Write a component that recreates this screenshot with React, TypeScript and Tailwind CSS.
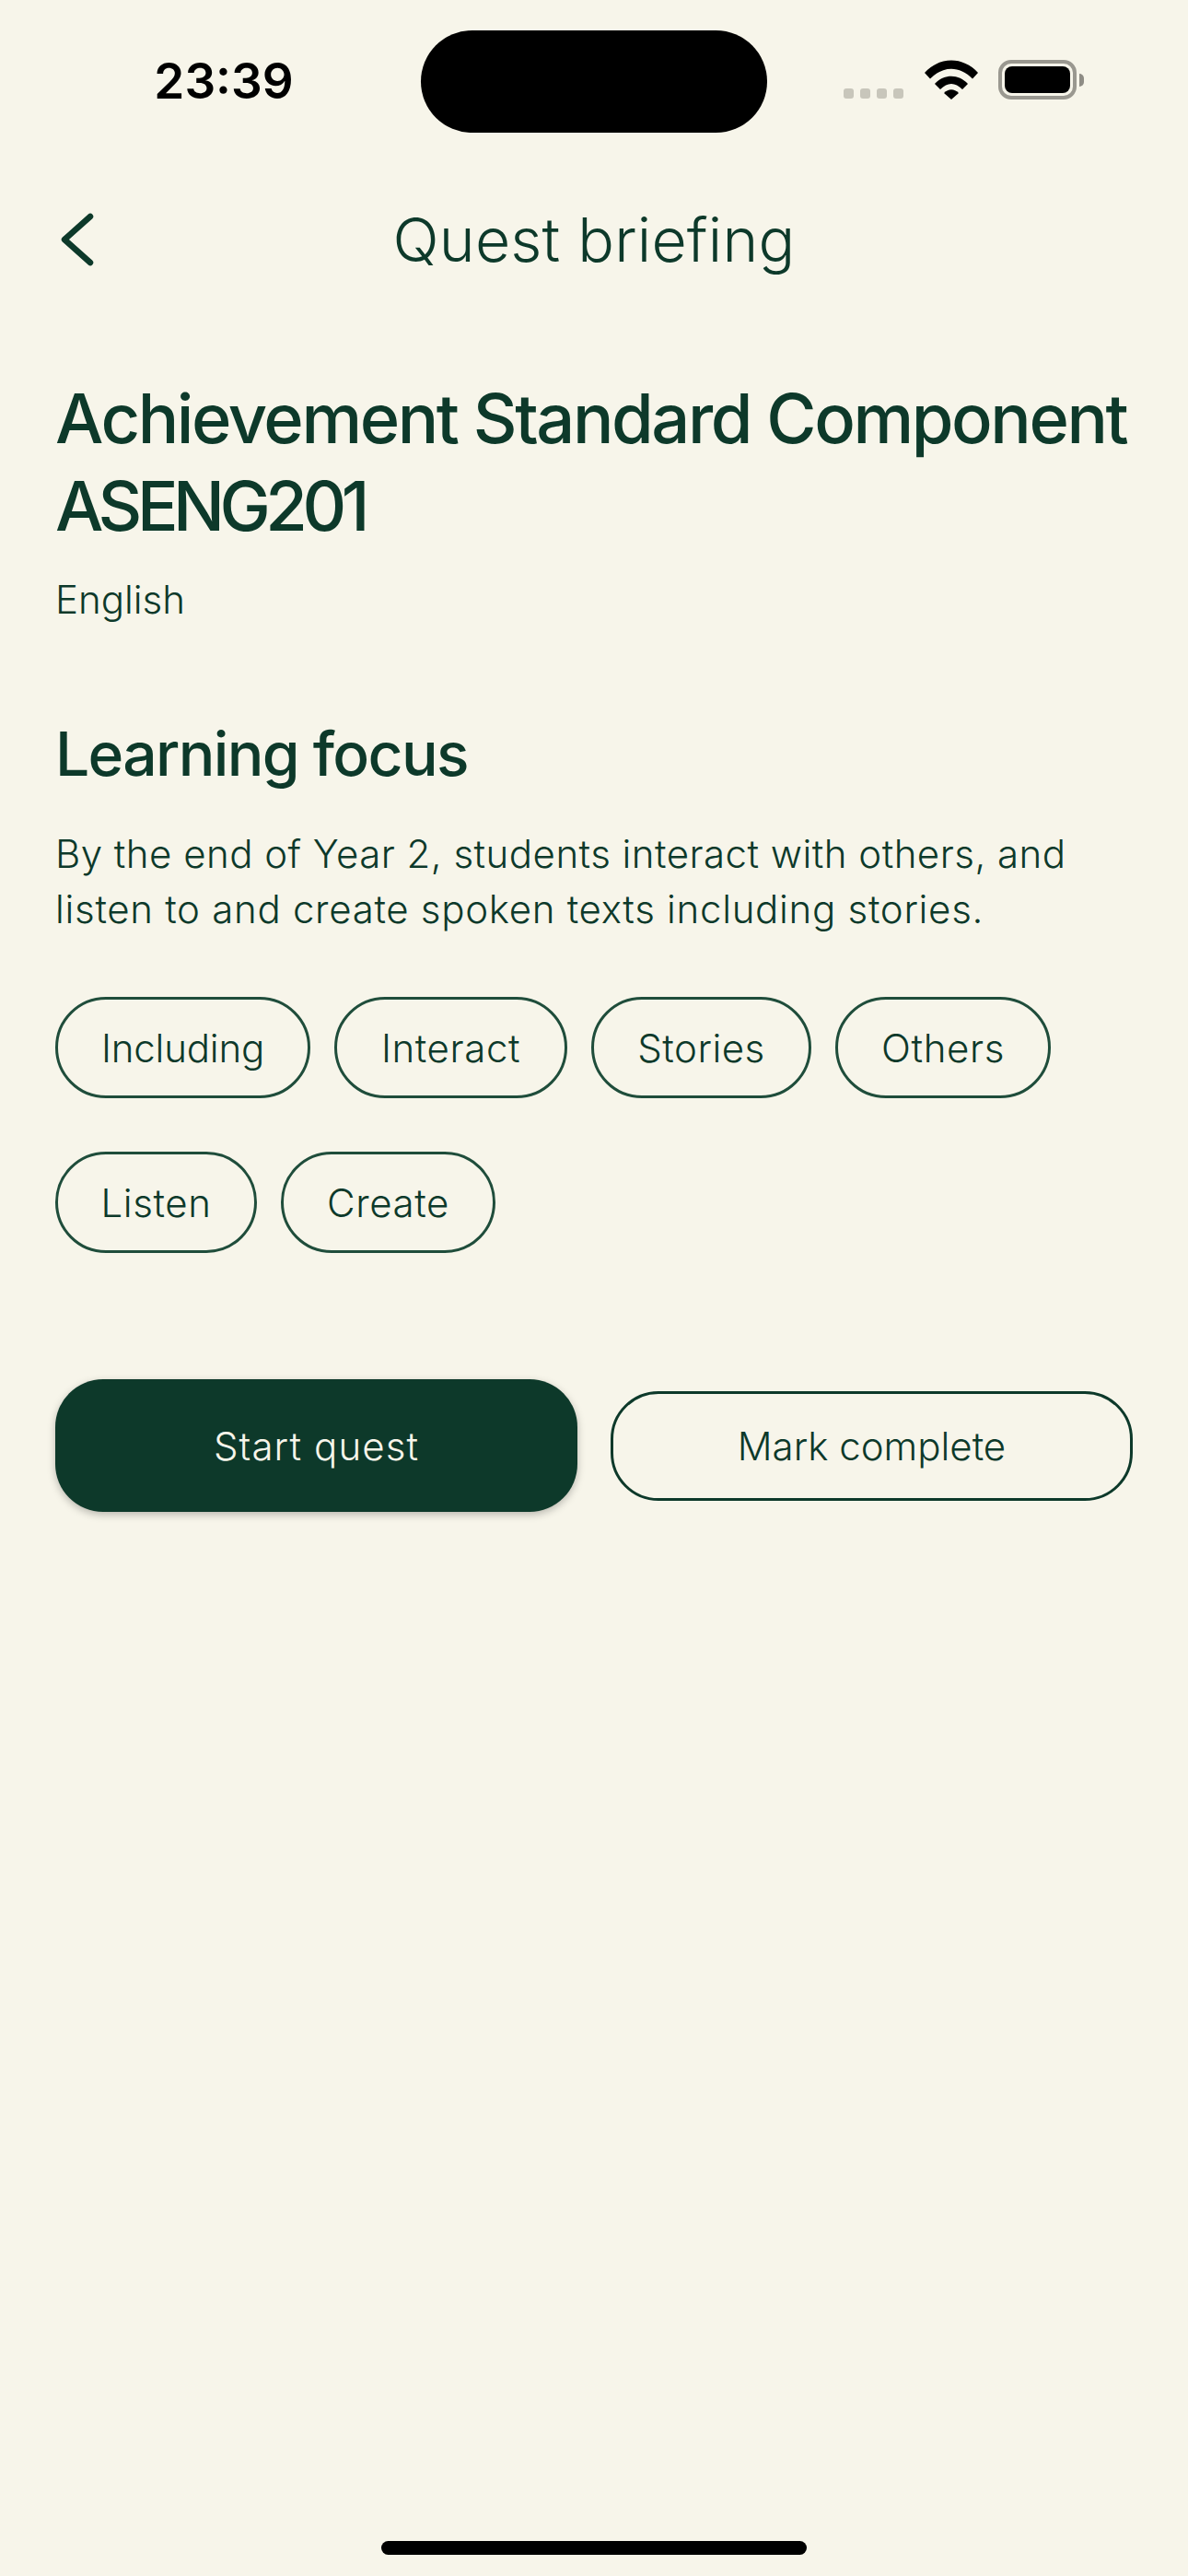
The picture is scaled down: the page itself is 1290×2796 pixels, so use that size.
const chipRows = [
  [
    { label: 'Including', className: 'w-[277px] tracking-[-0.2px]' },
    { label: 'Interact', className: 'w-[253px] tracking-[0.6px]' },
    { label: 'Stories', className: 'w-[239px] tracking-[0.5px]' },
    { label: 'Others', className: 'w-[234px] tracking-[0.6px]' },
  ],
  [
    { label: 'Listen', className: 'w-[219px] tracking-[0.6px]' },
    { label: 'Create', className: 'w-[233px] tracking-[0.6px]' },
  ],
]

function StatusBar() {
  return (
    <div className="flex items-start h-[144px] pt-[33px]">
      <div className="w-[457px] h-[111px] flex items-center justify-center pl-[29px]">
        <span className="text-[53px] font-semibold text-black leading-none">23:39</span>
      </div>
      <div className="w-[376px] h-[111px] bg-black rounded-[56px]" />
      <div className="flex items-start pt-[32px] pl-[83px]">
        <div className="flex gap-[7px] mt-[31px]">
          <div className="w-[11px] h-[11px] rounded-[3px] bg-[#c8c6bb]" />
          <div className="w-[11px] h-[11px] rounded-[3px] bg-[#c8c6bb]" />
          <div className="w-[11px] h-[11px] rounded-[3px] bg-[#c8c6bb]" />
          <div className="w-[11px] h-[11px] rounded-[3px] bg-[#c8c6bb]" />
        </div>
        <svg className="ml-[23px]" width="58" height="43" viewBox="0 0 58 43" fill="black">
          <path d="M0 14 C16 -4 42 -4 58 14 L52 20.5 C38 6 20 6 6 20.5 Z" />
          <path d="M11 26 C21 15 37 15 47 26 L41 32 C33 24 25 24 17 32 Z" />
          <path d="M21 36 C26 31 32 31 37 36 L29 43 Z" />
        </svg>
        <div className="ml-[22px] flex items-center">
          <div className="w-[85px] h-[43px] rounded-[14px] border-[4px] border-[#9a9890] p-[3px]">
            <div className="w-full h-full bg-black rounded-[8px]" />
          </div>
          <div className="w-[5px] h-[14px] rounded-r-[5px] bg-[#8e8c85] ml-[3px]" />
        </div>
      </div>
    </div>
  )
}

export default function App() {
  return (
    <div className="w-[1290px] h-[2796px] bg-[#f7f5ea] flex flex-col font-['Inter',sans-serif] text-[#0d392a]">
      <StatusBar />

      <div className="relative flex items-center justify-center h-[80px] mt-[76px]">
        <svg className="absolute left-[62px] top-[10px]" width="44" height="60" viewBox="0 0 44 60" fill="none">
          <path d="M36 5 L8 30 L36 55" stroke="#0d392a" strokeWidth="6.5" strokeLinecap="round" strokeLinejoin="round" />
        </svg>
        <h1 className="text-[66px] font-light leading-none tracking-[0.2px]">Quest briefing</h1>
      </div>

      <div className="flex flex-col px-[60px] pt-[107px]">
        <h2 className="text-[74px] font-[550] leading-[95px] tracking-[-2.43px] whitespace-nowrap">
          Achievement Standard Component
          <br />
          <span className="tracking-[-5.5px]">ASENG201</span>
        </h2>
        <p className="text-[42px] font-light leading-[60px] mt-[24px]">English</p>

        <h3 className="text-[66px] font-[550] leading-[80px] tracking-[-1.7px] mt-[97px]">Learning focus</h3>
        <p className="text-[42px] font-light leading-[60px] mt-[39px] tracking-[0.47px]">
          By the end of Year 2, students interact with others, and
          <br />
          <span className="tracking-[0.7px]">listen to and create spoken texts including stories.</span>
        </p>

        <div className="flex flex-col gap-[58px] mt-[65px]">
          {chipRows.map((row, i) => (
            <div key={i} className="flex gap-[26px]">
              {row.map(chip => (
                <div
                  key={chip.label}
                  className={`${chip.className} h-[110px] flex items-center justify-center rounded-[55px] border-[3px] border-[#1f4d3b] text-[42px] font-light`}
                >
                  {chip.label}
                </div>
              ))}
            </div>
          ))}
        </div>

        <div className="flex items-center gap-[36px] mt-[137px]">
          <button className="w-[567px] h-[144px] rounded-[52px] bg-[#0d392a] text-[#f7f5ea] text-[42px] font-light tracking-[1.1px] shadow-[0_3px_8px_rgba(0,0,0,0.25)]">
            Start quest
          </button>
          <button className="w-[567px] h-[119px] rounded-[52px] border-[3px] border-[#0d392a] text-[42px] font-light">
            Mark complete
          </button>
        </div>
      </div>

      <div className="mt-auto mb-[23px] self-center w-[462px] h-[15px] rounded-full bg-black" />
    </div>
  )
}
